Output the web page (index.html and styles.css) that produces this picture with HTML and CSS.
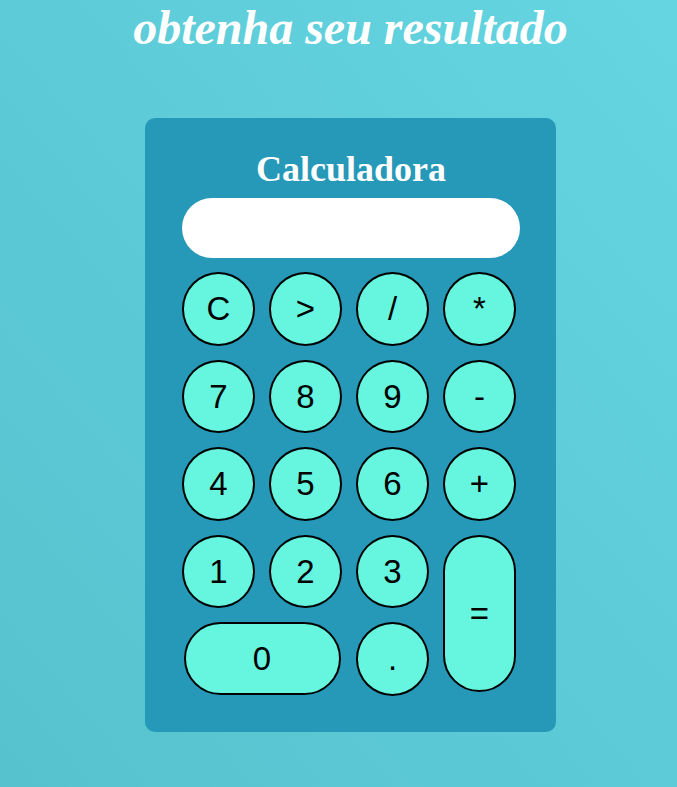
FILE: index.html
```html
<!DOCTYPE html>
<html lang="pt">
<head>
<meta charset="utf-8">
<title>Calculadora</title>
<link rel="stylesheet" href="styles.css">
</head>
<body>
<main class="page">
  <h1 class="headline">obtenha seu resultado</h1>
  <section class="calc">
    <h2 class="calc-title">Calculadora</h2>
    <input class="display" type="text" aria-label="resultado">
    <div class="keys">
      <button class="key">C</button>
      <button class="key">&gt;</button>
      <button class="key">/</button>
      <button class="key">*</button>
      <button class="key">7</button>
      <button class="key">8</button>
      <button class="key">9</button>
      <button class="key">-</button>
      <button class="key">4</button>
      <button class="key">5</button>
      <button class="key">6</button>
      <button class="key">+</button>
      <button class="key">1</button>
      <button class="key">2</button>
      <button class="key">3</button>
      <button class="key key-equals">=</button>
      <button class="key key-zero">0</button>
      <button class="key">.</button>
    </div>
  </section>
</main>
</body>
</html>
```

FILE: styles.css
```css
html, body {
  margin: 0;
  padding: 0;
}

body {
  min-height: 787px;
  background: linear-gradient(to bottom left, #64d5e1, #56c2ce);
  font-family: "Liberation Sans", Arial, sans-serif;
}

.page {
  display: flex;
  flex-direction: column;
  align-items: center;
  padding-left: 24px;
}

.headline {
  margin: 0;
  font-family: "Liberation Serif", "Times New Roman", serif;
  font-style: italic;
  font-weight: bold;
  font-size: 48px;
  line-height: 55px;
  color: #ffffff;
}

.calc {
  margin-top: 63px;
  width: 411px;
  height: 614px;
  box-sizing: border-box;
  padding: 31px 36px 0 37px;
  background: #2698b8;
  border-radius: 10px;
  display: flex;
  flex-direction: column;
}

.calc-title {
  margin: 0;
  text-align: center;
  font-family: "Liberation Serif", "Times New Roman", serif;
  font-weight: bold;
  font-size: 36px;
  line-height: 41px;
  color: #ffffff;
}

.display {
  margin-top: 8px;
  width: 338px;
  height: 60px;
  box-sizing: border-box;
  border: none;
  border-radius: 30px;
  background: #ffffff;
  outline: none;
}

.keys {
  margin-top: 14px;
  display: grid;
  grid-template-columns: repeat(4, 73px);
  grid-auto-rows: 73.5px;
  column-gap: 14px;
  row-gap: 14px;
}

.key {
  box-sizing: border-box;
  width: 100%;
  height: 100%;
  padding: 0;
  border: 2.5px solid #000000;
  border-radius: 50%;
  background: #66f5df;
  color: #000000;
  font-family: "Liberation Sans", Arial, sans-serif;
  font-size: 33px;
  line-height: 1;
  display: flex;
  align-items: center;
  justify-content: center;
}

.key-equals {
  grid-column: 4;
  grid-row: 4 / span 2;
  height: 157px;
  align-self: start;
  border-radius: 37px;
}

.key-zero {
  grid-column: 1 / span 2;
  width: 157px;
  height: 73px;
  justify-self: center;
  border-radius: 37px;
}
```
